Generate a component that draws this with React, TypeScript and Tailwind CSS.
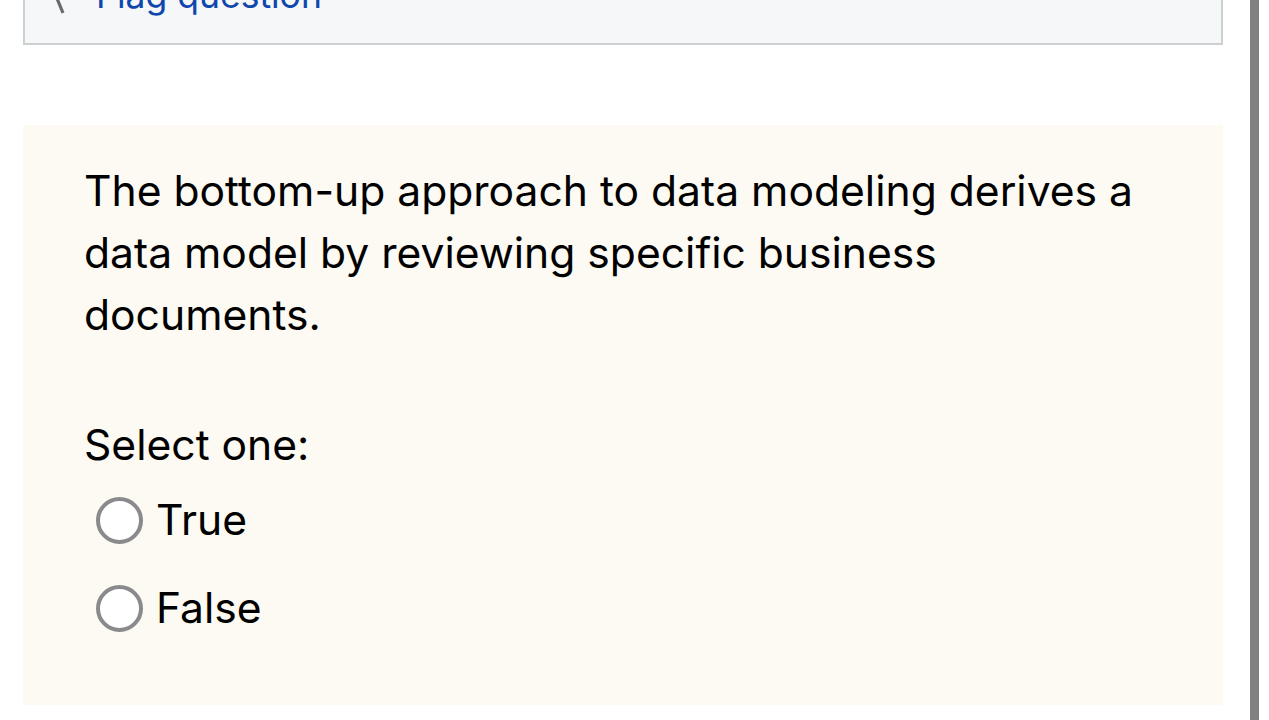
// Quiz question view: tail of the info box (flag link) and the true/false question body.

const FONT = { fontFamily: "Inter, 'Noto Sans', 'Liberation Sans', sans-serif" };

function Radio({ label }: { label: string }) {
  return (
    <label className="flex h-[62px] items-center">
      <span className="ml-[12px] h-[47px] w-[47px] shrink-0 rounded-full border-[4px] border-[#8a8a8c] bg-white" />
      <span className="ml-[13px] text-[42.6px] leading-[62px] text-black">{label}</span>
    </label>
  );
}

export default function App() {
  return (
    <div className="flex h-[720px] w-[1269px] overflow-hidden bg-white" style={FONT}>
      <div className="flex-1 pl-[23px] pr-[27px]">
        <div className="-mt-[60px] flex h-[105px] items-end border-2 border-[#cdd0d2] bg-[#f5f7f8] pb-[16px] pl-[30px]">
          <svg width="14" height="60" viewBox="0 0 14 60" className="mb-[-11px] mr-[27px] text-[#6a6a6a]">
            <path d="M1 18 L8 35" stroke="currentColor" strokeWidth="3.2" fill="none" />
          </svg>
          <a className="text-[35.5px] leading-[62px] text-[#0f47ad]">Flag question</a>
        </div>

        <div className="mt-[80px] h-[580px] bg-[#fcfaf2] pl-[61px] pr-[60px] pt-[35px]">
          <p className="text-[42.6px] leading-[62px] text-black">
            The bottom-up approach to data modeling derives a data model by reviewing specific business documents.
          </p>
          <p className="mt-[68px] text-[42.6px] leading-[62px] text-black">Select one:</p>
          <div className="mt-[13px] flex flex-col gap-[26px]">
            <Radio label="True" />
            <Radio label="False" />
          </div>
        </div>
      </div>
      <div className="w-[9px] shrink-0 bg-[#808080]" />
      <div className="w-[10px] shrink-0 bg-white" />
    </div>
  );
}
